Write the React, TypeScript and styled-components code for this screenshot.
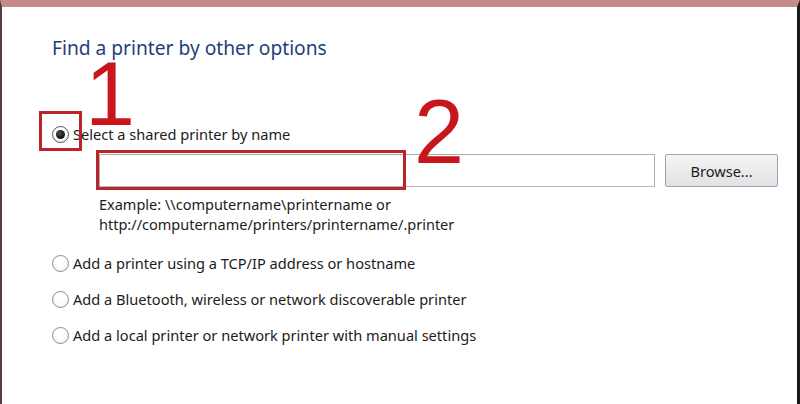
import React from "react";
import styled, { createGlobalStyle } from "styled-components";

const GlobalStyle = createGlobalStyle`
  html, body {
    margin: 0;
    padding: 0;
    background: #ffffff;
  }
  body {
    font-family: "Noto Sans", "Open Sans", sans-serif;
  }
`;

const Window = styled.div`
  position: relative;
  width: 800px;
  height: 404px;
  box-sizing: border-box;
  background: #ffffff;
  border-top: 7px solid #c48b88;
  border-left: 2px solid #5a3a3a;
  border-right: 3px solid #1a1a1a;
  overflow: hidden;
`;

const Content = styled.div`
  display: flex;
  flex-direction: column;
  padding: 27px 0 0 50px;
`;

const Title = styled.h1`
  margin: 0;
  font-size: 19.2px;
  font-weight: 400;
  line-height: 28px;
  color: #1f3f7a;
`;

const Options = styled.div`
  display: flex;
  flex-direction: column;
  margin-top: 61px;
`;

interface OptionRowProps {
  gap?: number;
  top?: number;
}

const OptionRow = styled.label<OptionRowProps>`
  display: flex;
  align-items: center;
  gap: 4px;
  height: 22px;
  margin-top: ${props => props.top ?? 0}px;
  margin-bottom: ${props => props.gap ?? 0}px;
  font-size: 14.6px;
  color: #1c1c1c;
`;

interface RadioProps {
  checked?: boolean;
}

const Radio = styled.span<RadioProps>`
  position: relative;
  width: 17px;
  height: 17px;
  box-sizing: border-box;
  border-radius: 50%;
  border: 1px solid ${props => (props.checked ? "#555555" : "#8c8c8c")};
  background: radial-gradient(circle at 50% 40%, #ffffff 40%, #e8e8e8 100%);
  flex: 0 0 auto;

  &::after {
    content: "";
    display: ${props => (props.checked ? "block" : "none")};
    position: absolute;
    left: 3px;
    top: 3px;
    width: 9px;
    height: 9px;
    border-radius: 50%;
    background: radial-gradient(circle at 40% 35%, #4a4a4a 0%, #111111 70%);
  }
`;

const Indented = styled.div`
  display: flex;
  flex-direction: column;
  padding-left: 47px;
  margin-top: 9px;
`;

const PathRow = styled.div`
  display: flex;
  align-items: center;
  gap: 10px;
`;

const NameInput = styled.div`
  width: 556px;
  height: 33px;
  box-sizing: border-box;
  border: 1px solid #abadb3;
  border-bottom-color: #b8b8b8;
  background: #ffffff;
`;

const BrowseButton = styled.button`
  width: 113px;
  height: 33px;
  box-sizing: border-box;
  border: 1px solid #8fa7c0;
  border-radius: 2px;
  background: linear-gradient(#f4f4f4, #e2e2e2);
  font-family: "Noto Sans", "Open Sans", sans-serif;
  font-size: 14.6px;
  color: #1c1c1c;
  padding: 0;
`;

const Hint = styled.div`
  margin-top: 7px;
  font-size: 14.5px;
  line-height: 20px;
  color: #1c1c1c;
`;

interface MarkProps {
  x: number;
  y: number;
  w: number;
  h: number;
}

const Annotation = styled.div<MarkProps>`
  position: absolute;
  left: ${props => props.x}px;
  top: ${props => props.y}px;
  width: ${props => props.w}px;
  height: ${props => props.h}px;
  border: 3px solid #b9252b;
  box-sizing: border-box;
`;

interface NumberProps {
  x: number;
  y: number;
}

const BigNumber = styled.div<NumberProps>`
  position: absolute;
  left: ${props => props.x}px;
  top: ${props => props.y}px;
  font-family: "Liberation Sans", Arial, sans-serif;
  font-size: 90px;
  line-height: 60px;
  color: #c8161d;
`;

const App = () => {
  return (
    <>
      <GlobalStyle />
      <Window>
        <Content>
          <Title>Find a printer by other options</Title>
          <Options>
            <OptionRow>
              <Radio checked />
              Select a shared printer by name
            </OptionRow>
            <Indented>
              <PathRow>
                <NameInput />
                <BrowseButton>Browse...</BrowseButton>
              </PathRow>
              <Hint>
                Example: \\computername\printername or
                <br />
                http://computername/printers/printername/.printer
              </Hint>
            </Indented>
            <OptionRow gap={14} top={18}>
              <Radio />
              Add a printer using a TCP/IP address or hostname
            </OptionRow>
            <OptionRow gap={14}>
              <Radio />
              Add a Bluetooth, wireless or network discoverable printer
            </OptionRow>
            <OptionRow>
              <Radio />
              Add a local printer or network printer with manual settings
            </OptionRow>
          </Options>
        </Content>
        <Annotation x={37} y={104} w={43} h={40} />
        <Annotation x={94} y={143} w={310} h={40} />
        <BigNumber x={83} y={57}>1</BigNumber>
        <BigNumber x={412} y={95}>2</BigNumber>
      </Window>
    </>
  );
};

export default App;
